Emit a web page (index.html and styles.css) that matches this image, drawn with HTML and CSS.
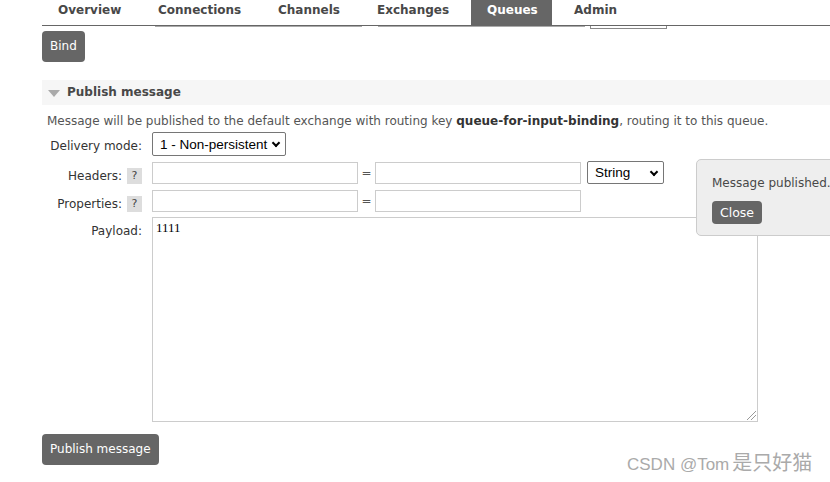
FILE: index.html
```html
<!DOCTYPE html>
<html>
<head>
<meta charset="utf-8">
<link rel="stylesheet" href="styles.css">
</head>
<body>
<div class="page">
  <nav class="tabs">
    <span class="tab">Overview</span>
    <span class="tab">Connections</span>
    <span class="tab">Channels</span>
    <span class="tab">Exchanges</span>
    <span class="tab active">Queues</span>
    <span class="tab">Admin</span>
  </nav>
  <div class="rule">
    <span class="seg seg1"></span>
    <span class="seg seg2"></span>
    <span class="stub"></span>
  </div>
  <div class="bindrow"><button class="btn">Bind</button></div>

  <section class="section">
    <h2 class="section-head"><span class="tri"></span>Publish message</h2>
    <p class="desc">Message will be published to the default exchange with routing key <b>queue-for-input-binding</b>, routing it to this queue.</p>
    <div class="form">
      <label class="lbl">Delivery mode:</label>
      <div class="field"><div class="select sel-mode">1 - Non-persistent<span class="chev"></span></div></div>

      <label class="lbl">Headers: <span class="help">?</span></label>
      <div class="field kv">
        <div class="input"></div><span class="eq">=</span><div class="input"></div>
        <div class="select sel-type">String<span class="chev"></span></div>
      </div>

      <label class="lbl">Properties: <span class="help">?</span></label>
      <div class="field kv">
        <div class="input"></div><span class="eq">=</span><div class="input"></div>
      </div>

      <label class="lbl">Payload:</label>
      <div class="field"><div class="textarea">1111<span class="grip"></span></div></div>
    </div>
    <div class="pubrow"><button class="btn">Publish message</button></div>
  </section>

  <div class="popup">
    <p>Message published.</p>
    <button class="btn small">Close</button>
  </div>
  <div class="watermark">CSDN @Tom<span class="cjk">是只好猫</span></div>
</div>
</body>
</html>
```

FILE: styles.css
```css
* { box-sizing: border-box; }
html, body { margin: 0; padding: 0; background: #fff; }
body {
  font-family: "DejaVu Sans", Verdana, sans-serif;
  font-size: 12px;
  color: #484848;
  overflow: hidden;
  width: 830px;
  height: 482px;
}
.page { position: relative; width: 830px; height: 482px; padding-left: 42px; }

.tabs { display: flex; height: 25px; }
.tab {
  font-weight: bold;
  font-size: 12px;
  color: #484848;
  padding: 3px 0 0 16px;
  line-height: 14px;
}
.tab:nth-child(1) { width: 100px; }
.tab:nth-child(2) { width: 120px; }
.tab:nth-child(3) { width: 99px; }
.tab:nth-child(4) { width: 110px; }
.tab.active { background: #666; color: #fff; width: 81px; }
.tab:nth-child(6) { padding-left: 22px; }

.rule { position: relative; height: 2px; border-top: 1px solid #666; }
.seg { position: absolute; top: 0; height: 1px; background: #aaa; }
.seg1 { left: 113px; width: 207px; }
.seg2 { left: 336px; width: 207px; }
.stub {
  position: absolute; top: 0; left: 548px; width: 77px; height: 3px;
  border: 1px solid #888; border-top: none;
}

.btn {
  font-family: "DejaVu Sans", Verdana, sans-serif;
  font-size: 12px;
  font-weight: normal;
  color: #fff;
  background: #666;
  border: none;
  border-radius: 4px;
  padding: 0 8px;
  height: 31px;
  line-height: 31px;
}
.bindrow { margin-top: 4px; }

.section { margin-top: 18px; }
.section-head {
  margin: 0;
  background: #f6f6f6;
  height: 25px;
  line-height: 25px;
  font-size: 12px;
  font-weight: bold;
  color: #484848;
  display: flex;
  align-items: center;
  padding-left: 6px;
}
.tri {
  width: 0; height: 0;
  border-left: 6px solid transparent;
  border-right: 6px solid transparent;
  border-top: 7px solid #aaa;
  margin-right: 7px;
  margin-top: 1px;
}
.desc {
  margin: 9px 0 0 5px;
  line-height: 14px;
  font-size: 12px;
  color: #555;
}
.desc b { color: #333; }

.form {
  display: grid;
  grid-template-columns: 100px 1fr;
  column-gap: 10px;
  row-gap: 5px;
  margin-top: 4px;
  align-items: start;
}
.lbl {
  font-size: 12px;
  line-height: 14px;
  color: #333;
  display: flex;
  justify-content: flex-end;
  align-items: center;
  gap: 5px;
  padding-top: 7px;
}
.help {
  display: inline-block;
  width: 15px; height: 16px;
  background: #ddd;
  text-align: center;
  line-height: 16px;
  font-size: 11px;
  color: #444;
}
.field { display: flex; align-items: center; }
.kv { height: 23px; }
.select {
  font-family: "Liberation Sans", Arial, sans-serif;
  font-size: 13.5px;
  color: #000;
  border: 1px solid #767676;
  border-radius: 2px;
  background: #fff;
  display: flex;
  align-items: center;
  padding-left: 7px;
  position: relative;
}
.sel-mode { width: 134px; height: 24px; }
.sel-type { width: 77px; height: 23px; margin-left: 6px; }
.chev {
  position: absolute; right: 6px; top: 7px;
  width: 6px; height: 6px;
  border-right: 2px solid #000;
  border-bottom: 2px solid #000;
  transform: rotate(45deg);
}
.input {
  width: 206px; height: 22px;
  border: 1px solid #ccc;
  background: #fff;
}
.eq { width: 17px; text-align: center; font-size: 12px; color: #555; }
.textarea {
  position: relative;
  width: 606px; height: 205px;
  border: 1px solid #ccc;
  font-family: "Liberation Serif", serif;
  font-size: 13px;
  color: #000;
  padding: 2px 3px;
}
.grip {
  position: absolute; right: 1px; bottom: 1px;
  width: 9px; height: 9px;
  background: linear-gradient(135deg, transparent 45%, #999 45%, #999 52%, transparent 52%, transparent 70%, #999 70%, #999 77%, transparent 77%);
}
.pubrow { margin-top: 12px; }

.popup {
  position: absolute;
  left: 696px; top: 159px;
  width: 160px; height: 77px;
  background: #eee;
  border: 1px solid #ccc;
  border-radius: 5px;
  padding: 15px 0 0 15px;
}
.popup p { margin: 0; font-size: 12px; color: #484848; line-height: 16px; }
.btn.small {
  height: 23px; line-height: 23px;
  padding: 0 8px;
  margin-top: 10px;
  font-size: 12.5px;
}

.watermark {
  position: absolute;
  left: 627px; top: 450px;
  font-family: "Liberation Sans", "Noto Sans CJK SC", sans-serif;
  font-size: 17px;
  line-height: 24px;
  color: #aaa;
  white-space: nowrap;
}
.cjk { font-family: "Noto Sans CJK SC", sans-serif; font-size: 20px; margin-left: 3px; }
```
